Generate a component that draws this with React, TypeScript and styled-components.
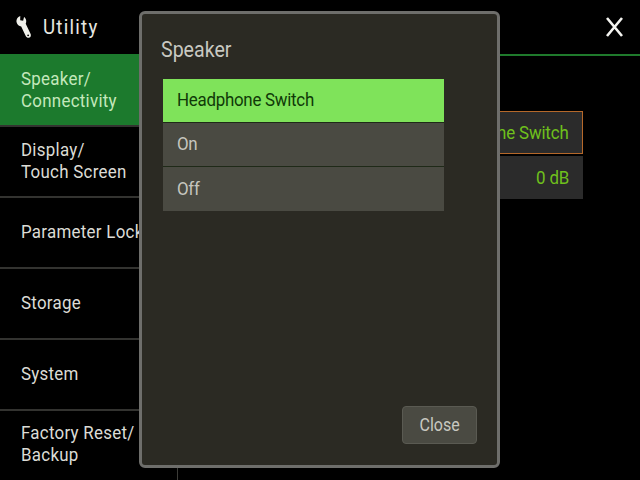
import React from 'react'
import styled, { createGlobalStyle } from 'styled-components'

const GlobalStyle = createGlobalStyle`
  html, body {
    margin: 0;
    width: 640px;
    height: 480px;
    overflow: hidden;
    background: #000;
  }
  body {
    font-family: Roboto, sans-serif;
  }
`

const Screen = styled.div`
  position: relative;
  width: 640px;
  height: 480px;
  display: flex;
  flex-direction: column;
  background: #000;
  overflow: hidden;
`

// the panel font is much narrower than anything installed
const Label = styled.span<{ $end?: boolean }>`
  display: block;
  white-space: nowrap;
  transform: scaleX(0.89);
  transform-origin: ${(p) => (p.$end ? 'right' : 'left')} center;
`

const Header = styled.header`
  flex: 0 0 56px;
  box-sizing: border-box;
  display: flex;
  align-items: center;
  justify-content: space-between;
  padding: 0 17px 0 15px;
  border-bottom: 2px solid #1f7a2c;
`

const Title = styled.div`
  display: flex;
  align-items: center;
  gap: 11px;
  color: #e8e8e2;
  font-size: 21px;
  letter-spacing: 1.4px;
`

const Body = styled.div`
  flex: 1;
  display: flex;
  min-height: 0;
  margin-top: -2px;
`

const Sidebar = styled.nav`
  width: 178px;
  box-sizing: border-box;
  border-right: 1px solid #3c3c38;
  display: flex;
  flex-direction: column;
`

const Tab = styled.div<{ $active?: boolean }>`
  flex: 0 0 ${(p) => (p.$active ? '73px' : '71px')};
  box-sizing: border-box;
  display: flex;
  align-items: center;
  padding: 0 0 ${(p) => (p.$active ? '0' : '2px')} 21px;
  border-bottom: 2px solid #333330;
  background: ${(p) => (p.$active ? '#1c7a2d' : 'transparent')};
  color: ${(p) => (p.$active ? '#c4e8bc' : '#dcdcd6')};
  font-size: 19px;
  line-height: 22px;
  letter-spacing: 0.3px;
  &:last-child {
    border-bottom: 0;
    padding-bottom: 6px;
  }
`

const Content = styled.main`
  flex: 1;
  display: flex;
  flex-direction: column;
  align-items: flex-end;
  gap: 2px;
  padding: 57px 57px 0 0;
`

const Field = styled.div<{ $focused?: boolean }>`
  width: 240px;
  height: 43px;
  box-sizing: border-box;
  display: flex;
  align-items: center;
  justify-content: flex-end;
  padding-right: 13px;
  background: #2b2b2b;
  border: 1px solid ${(p) => (p.$focused ? '#b5682a' : '#2b2b2b')};
  color: #6fc01c;
  font-size: 19px;
  letter-spacing: -0.2px;
`

const Dialog = styled.section`
  position: absolute;
  left: 139px;
  top: 11px;
  width: 361px;
  height: 457px;
  box-sizing: border-box;
  display: flex;
  flex-direction: column;
  padding: 23px 20px 21px 21px;
  background: #2b2a23;
  border: 3px solid #6e6e6b;
  border-radius: 6px;
`

const DialogTitle = styled.h2`
  margin: 0 0 17px -2px;
  font-weight: 400;
  font-size: 22px;
  line-height: 25px;
  color: #c9c9c2;
`

const Options = styled.div`
  width: 281px;
  display: flex;
  flex-direction: column;
`

const Option = styled.div<{ $selected?: boolean }>`
  height: 44px;
  box-sizing: border-box;
  display: flex;
  align-items: center;
  padding: 0 0 2px 14px;
  background: ${(p) => (p.$selected ? '#7fe35a' : '#4a4a42')};
  border-bottom: 1px solid #1f2a18;
  color: ${(p) => (p.$selected ? '#103a08' : '#c6c6bf')};
  font-size: 19px;
  letter-spacing: -0.3px;
  &:last-child {
    border-bottom: 0;
  }
`

const Footer = styled.div`
  margin-top: auto;
  display: flex;
  justify-content: flex-end;
`

const CloseButton = styled.button`
  width: 75px;
  height: 38px;
  display: flex;
  align-items: center;
  justify-content: center;
  padding: 0 0 2px;
  font-family: inherit;
  font-size: 18px;
  color: #c8c8c0;
  background: #4a4a42;
  border: 1px solid #5a5a52;
  border-radius: 4px;
`

const CloseLabel = styled(Label)`
  transform-origin: center;
`

const tabs = [
  ['Speaker/', 'Connectivity'],
  ['Display/', 'Touch Screen'],
  ['Parameter Lock'],
  ['Storage'],
  ['System'],
  ['Factory Reset/', 'Backup'],
]

export default function App() {
  return (
    <Screen>
      <GlobalStyle />
      <Header>
        <Title>
          <svg width="17" height="24" viewBox="0 0 18 26">
            <path
              fillRule="evenodd"
              d="M5.5 1 C2.5 2 0.8 5 1.6 8 C2.2 10.5 4.2 12 6.5 12.4 L11.4 22.8 C12.2 24.6 14.2 25.2 15.6 24.4 C17 23.6 17.4 21.8 16.6 20.2 L11.4 9.6 C12.4 7.6 12.2 4.8 10.6 3 L9.6 2.2 L8.6 6.2 L5.4 5.6 Z M14 21 A1 1 0 1 0 14 23 A1 1 0 1 0 14 21 Z"
              fill="#f0f0ea"
            />
          </svg>
          <Label>Utility</Label>
        </Title>
        <svg width="17" height="20" viewBox="0 0 17 20">
          <path d="M1 1 L16 19 M16 1 L1 19" stroke="#f4f4f0" strokeWidth="2.6" />
        </svg>
      </Header>
      <Body>
        <Sidebar>
          {tabs.map((lines, i) => (
            <Tab key={lines[0]} $active={i === 0}>
              <div>
                {lines.map((line) => (
                  <Label key={line}>{line}</Label>
                ))}
              </div>
            </Tab>
          ))}
        </Sidebar>
        <Content>
          <Field $focused>
            <Label $end>Headphone Switch</Label>
          </Field>
          <Field>
            <Label $end>0 dB</Label>
          </Field>
        </Content>
      </Body>
      <Dialog>
        <DialogTitle>
          <Label>Speaker</Label>
        </DialogTitle>
        <Options>
          <Option $selected>
            <Label>Headphone Switch</Label>
          </Option>
          <Option>
            <Label>On</Label>
          </Option>
          <Option>
            <Label>Off</Label>
          </Option>
        </Options>
        <Footer>
          <CloseButton>
            <CloseLabel>Close</CloseLabel>
          </CloseButton>
        </Footer>
      </Dialog>
    </Screen>
  )
}
